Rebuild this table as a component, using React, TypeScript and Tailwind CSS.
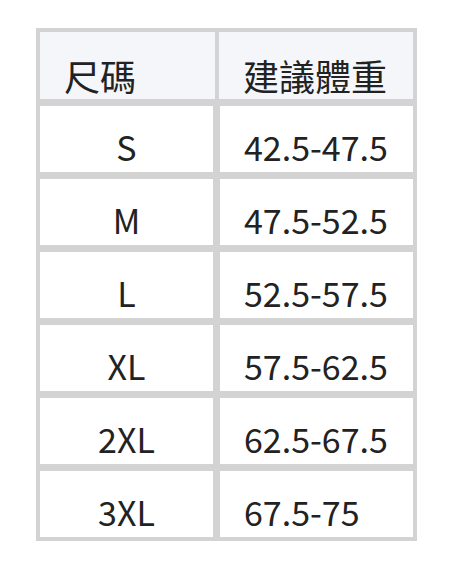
const rows = [
  ["S", "42.5-47.5"],
  ["M", "47.5-52.5"],
  ["L", "52.5-57.5"],
  ["XL", "57.5-62.5"],
  ["2XL", "62.5-67.5"],
  ["3XL", "67.5-75"],
];

export default function App() {
  return (
    <div
      className="w-[452px] h-[568px] bg-white pt-[28px] pl-[36px] text-[#222222]"
      style={{ fontFamily: '"Noto Sans CJK TC", "Noto Sans", sans-serif' }}
    >
      <div className="w-[381px] bg-[#d3d3d3] p-[4px] flex flex-col gap-[7px]">
        <div className="flex gap-[4px] h-[67px] text-[36px] leading-[48px]">
          <div className="w-[175px] bg-[#f5f6fa] flex items-end pl-[24px]">尺碼</div>
          <div className="flex-1 bg-[#f5f6fa] flex items-end pl-[24px]">建議體重</div>
        </div>
        {rows.map(([size, weight]) => (
          <div key={size} className="flex gap-[7px] h-[66px] text-[34px]">
            <div className="w-[173px] bg-white flex items-end justify-center">{size}</div>
            <div className="flex-1 bg-white flex items-end pl-[24px]">{weight}</div>
          </div>
        ))}
      </div>
    </div>
  );
}
